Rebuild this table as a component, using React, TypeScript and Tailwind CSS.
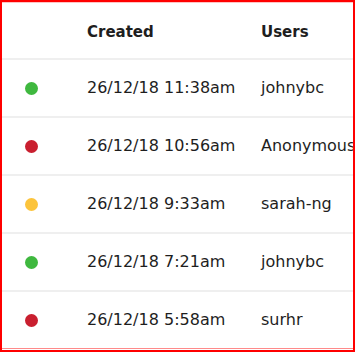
import React from 'react';

type Row = { status: 'green' | 'red' | 'yellow'; created: string; user: string };

const rows: Row[] = [
  { status: 'green', created: '26/12/18 11:38am', user: 'johnybc' },
  { status: 'red', created: '26/12/18 10:56am', user: 'Anonymous' },
  { status: 'yellow', created: '26/12/18 9:33am', user: 'sarah-ng' },
  { status: 'green', created: '26/12/18 7:21am', user: 'johnybc' },
  { status: 'red', created: '26/12/18 5:58am', user: 'surhr' },
];

const dotColor: Record<Row['status'], string> = {
  green: 'bg-[#3fb83f]',
  red: 'bg-[#c91f2f]',
  yellow: 'bg-[#fcc43c]',
};

export default function App() {
  return (
    <div className="w-[356px] h-[353px] bg-white">
      <div
        className="w-[355px] h-[352px] border-2 border-[#ff0000] overflow-hidden text-[#1e1e1e]"
        style={{ fontFamily: '"DejaVu Sans", sans-serif' }}
      >
        {/* header */}
        <div className="grid grid-cols-[85px_174px_1fr] items-center h-[58px] pt-[3px] border-t border-t-[#ffc4c4] border-b-2 border-b-[#efefef]">
          <div />
          <div className="text-[15px] font-bold">Created</div>
          <div className="text-[15px] font-bold">Users</div>
        </div>

        {rows.map((r, i) => (
          <div
            key={i}
            className={
              i === rows.length - 1
                ? 'grid grid-cols-[85px_174px_1fr] items-center h-[57px] border-b border-[#ff8a8a]'
                : 'grid grid-cols-[85px_174px_1fr] items-center h-[58px] border-b-2 border-[#efefef]'
            }
          >
            <div className="pl-[23px]">
              <span className={`block w-[13px] h-[13px] rounded-full ${dotColor[r.status]}`} />
            </div>
            <div className="text-[16px] whitespace-nowrap">{r.created}</div>
            <div className="text-[16px] whitespace-nowrap">{r.user}</div>
          </div>
        ))}
      </div>
    </div>
  );
}
